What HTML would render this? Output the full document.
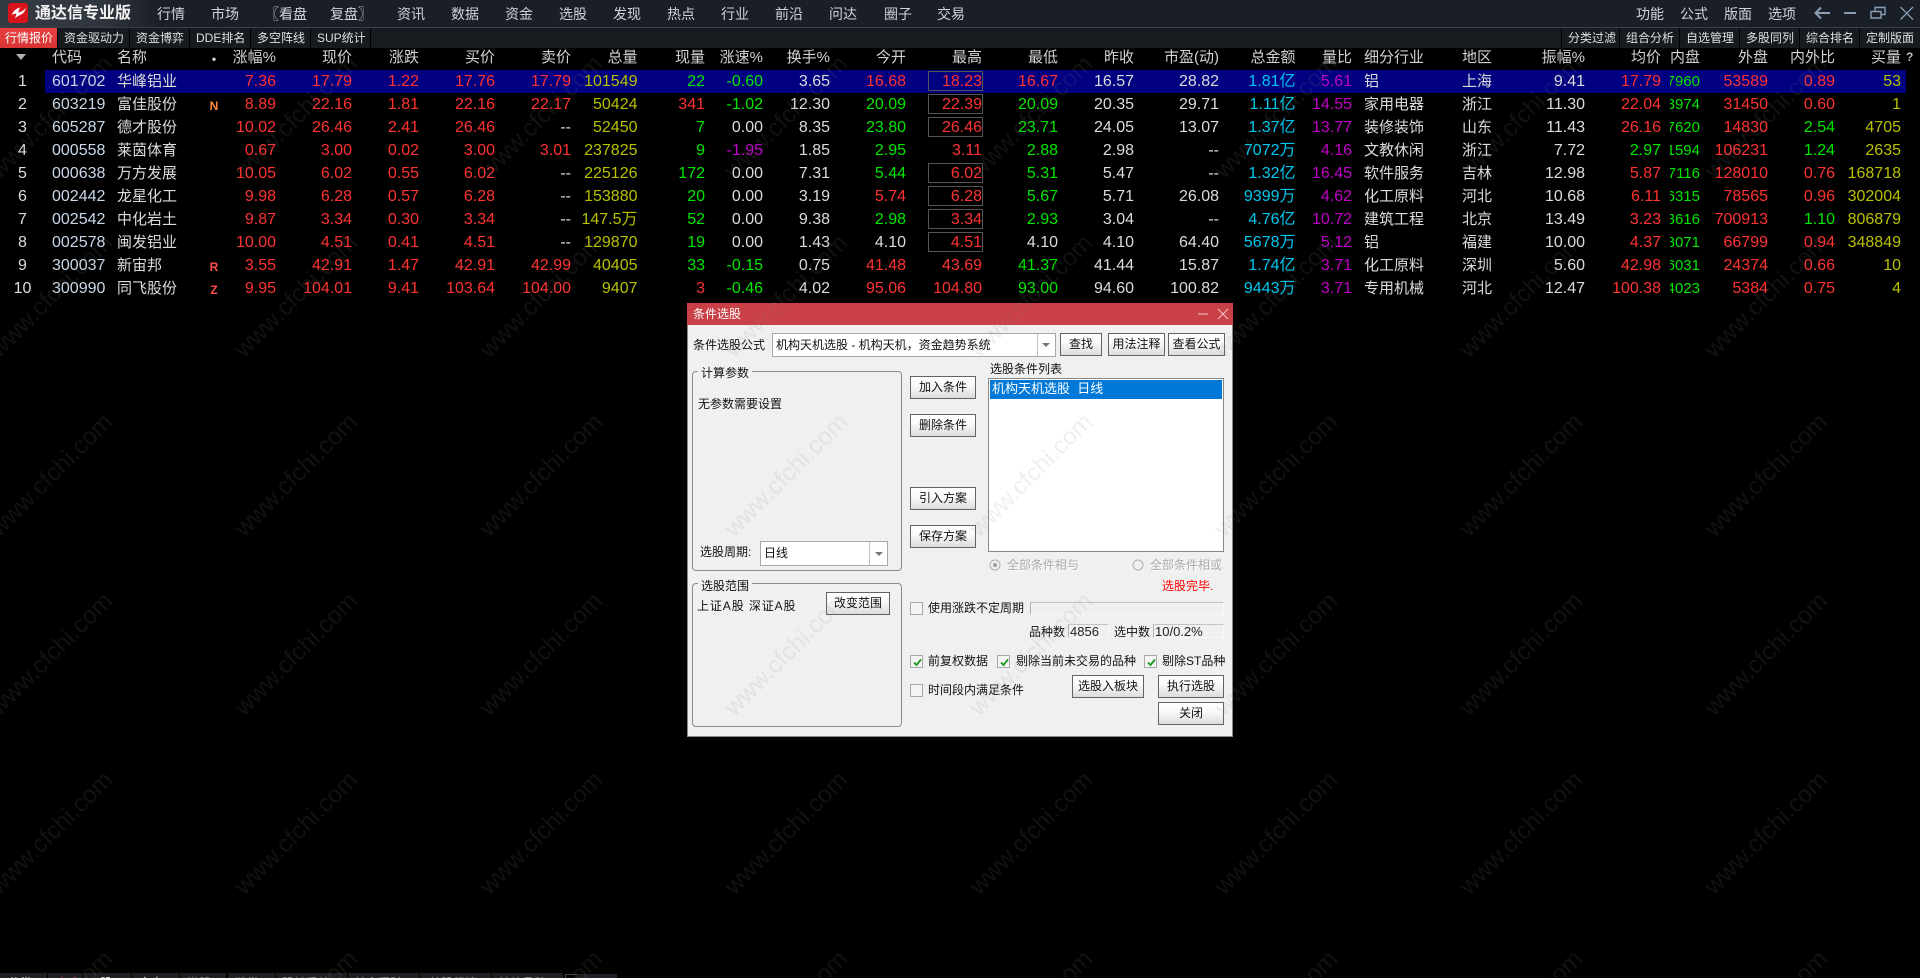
<!DOCTYPE html>
<html lang="zh-CN"><head><meta charset="utf-8"><title>通达信专业版</title>
<style>
*{box-sizing:border-box}
html,body{margin:0;padding:0;width:1920px;height:978px;overflow:hidden;background:#000}
body{position:relative;font-family:"Liberation Sans","Noto Sans CJK SC",sans-serif;color:#e0e0e0}
.a{position:absolute;white-space:nowrap}
#top{position:absolute;left:0;top:0;width:1920px;height:28px;background:linear-gradient(90deg,#343a42 0,#30363e 100px,#1a1f27 160px);border-bottom:1px solid #3a3f46}
.m{position:absolute;top:4px;line-height:20px;font-size:14px;color:#cfd3d8;white-space:nowrap}
#bar{position:absolute;left:0;top:28px;width:1920px;height:20px;background:#171b20}
.tb{position:absolute;top:0;height:20px;line-height:20px;font-size:12px;color:#dfdfdf;border-right:1px solid #000;padding-left:6px;white-space:nowrap;overflow:hidden}
.r{position:absolute;left:0;width:1920px;height:23px;line-height:23px;font-size:16px}
.r span{position:absolute;white-space:nowrap;top:0}
.r span:nth-child(1){left:0;width:45px;text-align:center;color:#dcdcdc}
.r span:nth-child(2){left:52px;color:#c8d8e8}
.r span:nth-child(3){left:117px;font-size:15px;color:#dcdcdc}
.r span:nth-child(4){left:204px;width:20px;text-align:center;font-size:12px;font-weight:bold;top:2px}
.r span:nth-child(5){right:1644px}
.r span:nth-child(6){right:1568px}
.r span:nth-child(7){right:1501px}
.r span:nth-child(8){right:1425px}
.r span:nth-child(9){right:1349px}
.r span:nth-child(10){right:1282.5px}
.r span:nth-child(11){right:1215px}
.r span:nth-child(12){right:1157px}
.r span:nth-child(13){right:1090px}
.r span:nth-child(14){right:1014px}
.r span:nth-child(15){right:938px}
.r span:nth-child(16){right:862px}
.r span:nth-child(17){right:786px}
.r span:nth-child(18){right:701px}
.r span:nth-child(19){right:624.5px}
.r span:nth-child(20){right:568px}
.r span:nth-child(21){left:1364px;font-size:15px;color:#dcdcdc}
.r span:nth-child(22){left:1462px;font-size:15px;color:#dcdcdc}
.r span:nth-child(23){right:335px}
.r span:nth-child(24){right:259px}
.r span:nth-child(25){left:1670px;width:30px;display:flex;justify-content:flex-end;overflow:hidden;font-size:15px}
.r span:nth-child(26){right:152px}
.r span:nth-child(27){right:85px}
.r span:nth-child(28){right:19px}
.h{font-size:15px}
.h span{color:#d2d2d2!important;font-size:15px!important}
.R{color:#ff3232}.G{color:#00e600}.W{color:#dcdcdc}.Y{color:#b8c000}.C{color:#00c8f0}.M{color:#c000c8}
.bx{position:absolute;left:928px;width:55px;height:20px;border:1px solid #555}
#dlg{position:absolute;left:687px;top:303px;width:546px;height:434px;background:#f0f0f0;border:1px solid #8a8a8a;border-top:none;color:#111;font-size:12px}
.d{position:absolute;white-space:nowrap;font-size:12px;line-height:18px;color:#111}
.btn{position:absolute;border:1px solid #636363;background:linear-gradient(#fff,#fafafa 40%,#dcdcdc);font-size:12px;text-align:center;color:#111;white-space:nowrap}
.grp{position:absolute;border:1px solid #8c8c8c;border-radius:4px}
.lg{position:absolute;background:#f0f0f0;padding:0 3px;font-size:12px;line-height:14px;color:#111;white-space:nowrap}
.cb{position:absolute;width:13px;height:13px;border:1px solid #a8a8a8;background:#f4f4f4}
.cb svg{position:absolute;left:1px;top:1px}
.sk{position:absolute;border:1px solid #f8f8f8;border-top-color:#c4c4c4;border-left-color:#b0b0b0;background:#f0f0f0;font-size:13px;line-height:13px;white-space:nowrap;color:#222}
.bt{position:absolute;top:973px;height:6px;background:#1c1f24;overflow:hidden;font-size:12px;line-height:14px;color:#8a8a8a}
.bt i{position:absolute;top:3px;font-style:normal;white-space:nowrap}
#wm{position:absolute;left:0;top:0;width:1920px;height:978px;pointer-events:none}
</style></head><body>

<div id="top">
<svg class="a" style="left:8px;top:3px" width="20" height="20" viewBox="0 0 20 20"><rect width="20" height="20" rx="3" fill="#d8141c"/><path d="M18 5C15 8 13 9 10 9.500L12 4.500C8 5.500 4.500 8.500 4 12C5.500 11 7 10.500 8.500 10.500L7 15.500C9 13.500 11 12.500 13 11.500C15.500 10.500 17 8 18 5Z" fill="#fff"/></svg>
<div class="a" style="left:35px;top:3px;line-height:22px;font-size:16px;font-weight:bold;color:#f2f2f2">通达信专业版</div>
<div class="m" style="left:157px">行情</div><div class="m" style="left:211px">市场</div>
<div class="m" style="left:265px">〖看盘</div><div class="m" style="left:330px">复盘〗</div>
<div class="m" style="left:397px">资讯</div><div class="m" style="left:451px">数据</div>
<div class="m" style="left:505px">资金</div><div class="m" style="left:559px">选股</div>
<div class="m" style="left:613px">发现</div><div class="m" style="left:667px">热点</div>
<div class="m" style="left:721px">行业</div><div class="m" style="left:775px">前沿</div>
<div class="m" style="left:829px">问达</div><div class="m" style="left:884px">圈子</div>
<div class="m" style="left:937px">交易</div>
<div class="m" style="left:1636px">功能</div><div class="m" style="left:1680px">公式</div>
<div class="m" style="left:1724px">版面</div><div class="m" style="left:1768px">选项</div>
<svg class="a" style="left:1812px;top:4px" width="104" height="18" viewBox="0 0 104 18" fill="none" stroke="#8a9fb5" stroke-width="1.6"><path d="M3 9H18M9 3.5L3.5 9L9 14.5" stroke-width="2"/><path d="M32 9H44" stroke-width="2"/><path d="M59 7.5H69V14H59ZM63 7.5V3.5H73V10.5H69" stroke-width="1.4"/><path d="M88.500 3L101 15.500M101 3L88.500 15.500" stroke-width="1.3"/></svg>
</div>

<div id="bar">
<div class="tb" style="left:0;width:58px;background:linear-gradient(#e84040,#d83434);padding-left:5px;color:#fff">行情报价</div>
<div class="tb" style="left:58px;width:72px">资金驱动力</div>
<div class="tb" style="left:130px;width:60px">资金博弈</div>
<div class="tb" style="left:190px;width:61px">DDE排名</div>
<div class="tb" style="left:251px;width:60px">多空阵线</div>
<div class="tb" style="left:311px;width:60px">SUP统计</div>
<div class="tb" style="left:1561px;width:59px;border-left:1px solid #000">分类过滤</div>
<div class="tb" style="left:1620px;width:60px">组合分析</div>
<div class="tb" style="left:1680px;width:60px">自选管理</div>
<div class="tb" style="left:1740px;width:60px">多股同列</div>
<div class="tb" style="left:1800px;width:60px">综合排名</div>
<div class="tb" style="left:1860px;width:60px;border-right:none">定制版面</div>
</div>

<div class="a" style="left:16px;top:54px;width:0;height:0;border-left:5px solid transparent;border-right:5px solid transparent;border-top:6px solid #b0b0b0"></div>
<div class="a" style="left:1906px;top:48px;font-size:12px;line-height:18px;font-weight:bold;color:#bbb">?</div>

<div class="r h" style="top:46px"><span></span><span>代码</span><span>名称</span><span style="font-size:12px!important">•</span><span>涨幅%</span><span>现价</span><span>涨跌</span><span>买价</span><span>卖价</span><span>总量</span><span>现量</span><span>涨速%</span><span>换手%</span><span>今开</span><span>最高</span><span>最低</span><span>昨收</span><span>市盈(动)</span><span>总金额</span><span>量比</span><span>细分行业</span><span>地区</span><span>振幅%</span><span>均价</span><span>内盘</span><span>外盘</span><span>内外比</span><span>买量</span></div>

<div class="a" style="left:45px;top:70px;width:1861px;height:22.500px;background:#000080"></div>
<div class="bx" style="top:71px"></div><div class="bx" style="top:94px"></div><div class="bx" style="top:117px"></div>
<div class="bx" style="top:163px"></div><div class="bx" style="top:186px"></div><div class="bx" style="top:209px"></div><div class="bx" style="top:232px"></div>

<div class="r" style="top:70px"><span>1</span><span>601702</span><span>华峰铝业</span><span></span><span class="R">7.36</span><span class="R">17.79</span><span class="R">1.22</span><span class="R">17.76</span><span class="R">17.79</span><span class="Y">101549</span><span class="G">22</span><span class="G">-0.60</span><span class="W">3.65</span><span class="R">16.68</span><span class="R">18.23</span><span class="R">16.67</span><span class="W">16.57</span><span class="W">28.82</span><span class="C">1.81亿</span><span class="M">5.61</span><span>铝</span><span>上海</span><span class="W">9.41</span><span class="R">17.79</span><span class="G">7960</span><span class="R">53589</span><span class="R">0.89</span><span class="Y">53</span></div>
<div class="r" style="top:93px"><span>2</span><span>603219</span><span>富佳股份</span><span style="color:#ff8c40">N</span><span class="R">8.89</span><span class="R">22.16</span><span class="R">1.81</span><span class="R">22.16</span><span class="R">22.17</span><span class="Y">50424</span><span class="R">341</span><span class="G">-1.02</span><span class="W">12.30</span><span class="G">20.09</span><span class="R">22.39</span><span class="G">20.09</span><span class="W">20.35</span><span class="W">29.71</span><span class="C">1.11亿</span><span class="M">14.55</span><span>家用电器</span><span>浙江</span><span class="W">11.30</span><span class="R">22.04</span><span class="G">3974</span><span class="R">31450</span><span class="R">0.60</span><span class="Y">1</span></div>
<div class="r" style="top:116px"><span>3</span><span>605287</span><span>德才股份</span><span></span><span class="R">10.02</span><span class="R">26.46</span><span class="R">2.41</span><span class="R">26.46</span><span class="W">--</span><span class="Y">52450</span><span class="G">7</span><span class="W">0.00</span><span class="W">8.35</span><span class="G">23.80</span><span class="R">26.46</span><span class="G">23.71</span><span class="W">24.05</span><span class="W">13.07</span><span class="C">1.37亿</span><span class="M">13.77</span><span>装修装饰</span><span>山东</span><span class="W">11.43</span><span class="R">26.16</span><span class="G">7620</span><span class="R">14830</span><span class="G">2.54</span><span class="Y">4705</span></div>
<div class="r" style="top:139px"><span>4</span><span>000558</span><span>莱茵体育</span><span></span><span class="R">0.67</span><span class="R">3.00</span><span class="R">0.02</span><span class="R">3.00</span><span class="R">3.01</span><span class="Y">237825</span><span class="G">9</span><span class="M">-1.95</span><span class="W">1.85</span><span class="G">2.95</span><span class="R">3.11</span><span class="G">2.88</span><span class="W">2.98</span><span class="W">--</span><span class="C">7072万</span><span class="M">4.16</span><span>文教休闲</span><span>浙江</span><span class="W">7.72</span><span class="G">2.97</span><span class="G">1594</span><span class="R">106231</span><span class="G">1.24</span><span class="Y">2635</span></div>
<div class="r" style="top:162px"><span>5</span><span>000638</span><span>万方发展</span><span></span><span class="R">10.05</span><span class="R">6.02</span><span class="R">0.55</span><span class="R">6.02</span><span class="W">--</span><span class="Y">225126</span><span class="G">172</span><span class="W">0.00</span><span class="W">7.31</span><span class="G">5.44</span><span class="R">6.02</span><span class="G">5.31</span><span class="W">5.47</span><span class="W">--</span><span class="C">1.32亿</span><span class="M">16.45</span><span>软件服务</span><span>吉林</span><span class="W">12.98</span><span class="R">5.87</span><span class="G">7116</span><span class="R">128010</span><span class="R">0.76</span><span class="Y">168718</span></div>
<div class="r" style="top:185px"><span>6</span><span>002442</span><span>龙星化工</span><span></span><span class="R">9.98</span><span class="R">6.28</span><span class="R">0.57</span><span class="R">6.28</span><span class="W">--</span><span class="Y">153880</span><span class="G">20</span><span class="W">0.00</span><span class="W">3.19</span><span class="R">5.74</span><span class="R">6.28</span><span class="G">5.67</span><span class="W">5.71</span><span class="W">26.08</span><span class="C">9399万</span><span class="M">4.62</span><span>化工原料</span><span>河北</span><span class="W">10.68</span><span class="R">6.11</span><span class="G">6315</span><span class="R">78565</span><span class="R">0.96</span><span class="Y">302004</span></div>
<div class="r" style="top:208px"><span>7</span><span>002542</span><span>中化岩土</span><span></span><span class="R">9.87</span><span class="R">3.34</span><span class="R">0.30</span><span class="R">3.34</span><span class="W">--</span><span class="Y">147.5万</span><span class="G">52</span><span class="W">0.00</span><span class="W">9.38</span><span class="G">2.98</span><span class="R">3.34</span><span class="G">2.93</span><span class="W">3.04</span><span class="W">--</span><span class="C">4.76亿</span><span class="M">10.72</span><span>建筑工程</span><span>北京</span><span class="W">13.49</span><span class="R">3.23</span><span class="G">8616</span><span class="R">700913</span><span class="G">1.10</span><span class="Y">806879</span></div>
<div class="r" style="top:231px"><span>8</span><span>002578</span><span>闽发铝业</span><span></span><span class="R">10.00</span><span class="R">4.51</span><span class="R">0.41</span><span class="R">4.51</span><span class="W">--</span><span class="Y">129870</span><span class="G">19</span><span class="W">0.00</span><span class="W">1.43</span><span class="W">4.10</span><span class="R">4.51</span><span class="W">4.10</span><span class="W">4.10</span><span class="W">64.40</span><span class="C">5678万</span><span class="M">5.12</span><span>铝</span><span>福建</span><span class="W">10.00</span><span class="R">4.37</span><span class="G">8071</span><span class="R">66799</span><span class="R">0.94</span><span class="Y">348849</span></div>
<div class="r" style="top:254px"><span>9</span><span>300037</span><span>新宙邦</span><span style="color:#ff5050">R</span><span class="R">3.55</span><span class="R">42.91</span><span class="R">1.47</span><span class="R">42.91</span><span class="R">42.99</span><span class="Y">40405</span><span class="G">33</span><span class="G">-0.15</span><span class="W">0.75</span><span class="R">41.48</span><span class="R">43.69</span><span class="G">41.37</span><span class="W">41.44</span><span class="W">15.87</span><span class="C">1.74亿</span><span class="M">3.71</span><span>化工原料</span><span>深圳</span><span class="W">5.60</span><span class="R">42.98</span><span class="G">6031</span><span class="R">24374</span><span class="R">0.66</span><span class="Y">10</span></div>
<div class="r" style="top:277px"><span>10</span><span>300990</span><span>同飞股份</span><span style="color:#ff5050">Z</span><span class="R">9.95</span><span class="R">104.01</span><span class="R">9.41</span><span class="R">103.64</span><span class="R">104.00</span><span class="Y">9407</span><span class="R">3</span><span class="G">-0.46</span><span class="W">4.02</span><span class="R">95.06</span><span class="R">104.80</span><span class="G">93.00</span><span class="W">94.60</span><span class="W">100.82</span><span class="C">9443万</span><span class="M">3.71</span><span>专用机械</span><span>河北</span><span class="W">12.47</span><span class="R">100.38</span><span class="G">4023</span><span class="R">5384</span><span class="R">0.75</span><span class="Y">4</span></div>

<div id="dlg">
<div style="position:absolute;left:-1px;top:0;width:546px;height:22px;background:#c94046"></div>
<div class="d" style="left:5px;top:2px;color:#fff">条件选股</div>
<svg class="a" style="left:510px;top:5px" width="36" height="12" fill="none" stroke="#f4c8c8" stroke-width="1"><path d="M0 6H10M20 1L30 11M30 1L20 11"/></svg>

<div class="d" style="left:5px;top:33px">条件选股公式</div>
<div class="a" style="left:84px;top:30px;width:284px;height:24px;background:#fff;border:1px solid #a8a8a8"></div>
<div class="a" style="left:349px;top:31px;width:1px;height:22px;background:#c0c0c0"></div>
<div class="a" style="left:354px;top:40px;width:0;height:0;border-left:4px solid transparent;border-right:4px solid transparent;border-top:4px solid #777"></div>
<div class="d" style="left:88px;top:33px">机构天机选股 - 机构天机，资金趋势系统</div>
<div class="btn" style="left:372px;top:30px;width:42px;height:23px;line-height:20px">查找</div>
<div class="btn" style="left:420px;top:30px;width:57px;height:23px;line-height:20px">用法注释</div>
<div class="btn" style="left:480px;top:30px;width:57px;height:23px;line-height:20px">查看公式</div>

<div class="grp" style="left:4px;top:68px;width:210px;height:200px"></div>
<div class="lg" style="left:10px;top:63px">计算参数</div>
<div class="d" style="left:10px;top:92px">无参数需要设置</div>
<div class="d" style="left:12px;top:240px">选股周期:</div>
<div class="a" style="left:72px;top:238px;width:128px;height:25px;background:#fff;border:1px solid #a8a8a8"></div>
<div class="a" style="left:181px;top:239px;width:1px;height:23px;background:#c0c0c0"></div>
<div class="a" style="left:187px;top:249px;width:0;height:0;border-left:4px solid transparent;border-right:4px solid transparent;border-top:4px solid #777"></div>
<div class="d" style="left:76px;top:241px">日线</div>

<div class="grp" style="left:4px;top:280px;width:210px;height:144px"></div>
<div class="lg" style="left:10px;top:276px">选股范围</div>
<div class="d" style="left:9px;top:294px;letter-spacing:.9px">上证A股 深证A股</div>
<div class="btn" style="left:138px;top:289px;width:64px;height:23px;line-height:20px">改变范围</div>

<div class="btn" style="left:222px;top:73px;width:66px;height:23px;line-height:20px">加入条件</div>
<div class="btn" style="left:222px;top:111px;width:66px;height:23px;line-height:20px">删除条件</div>
<div class="btn" style="left:222px;top:184px;width:66px;height:23px;line-height:20px">引入方案</div>
<div class="btn" style="left:222px;top:222px;width:66px;height:23px;line-height:20px">保存方案</div>

<div class="d" style="left:302px;top:57px">选股条件列表</div>
<div class="a" style="left:300px;top:75px;width:236px;height:174px;background:#fff;border:1px solid #888"></div>
<div class="a" style="left:302px;top:77px;width:232px;height:19px;background:#0078d7"></div>
<div class="d" style="left:304px;top:77px;color:#fff;font-size:13px;white-space:pre">机构天机选股  日线</div>

<svg class="a" style="left:301px;top:256px" width="12" height="12"><circle cx="6" cy="6" r="5" fill="#f0f0f0" stroke="#b0b0b0"/><circle cx="6" cy="6" r="2" fill="#a0a0a0"/></svg>
<div class="d" style="left:319px;top:253px;color:#a8a8a8;text-shadow:1px 1px 0 #fff">全部条件相与</div>
<svg class="a" style="left:444px;top:256px" width="12" height="12"><circle cx="6" cy="6" r="5" fill="#f0f0f0" stroke="#b0b0b0"/></svg>
<div class="d" style="left:462px;top:253px;color:#a8a8a8;text-shadow:1px 1px 0 #fff">全部条件相或</div>
<div class="d" style="left:474px;top:274px;color:#f00">选股完毕.</div>

<div class="cb" style="left:222px;top:299px"></div>
<div class="d" style="left:240px;top:296px">使用涨跌不定周期</div>
<div class="sk" style="left:342px;top:299px;width:194px;height:13px"></div>
<div class="d" style="left:341px;top:320px">品种数</div>
<div class="sk" style="left:380px;top:321px;width:41px;height:14px;padding-left:1px">4856</div>
<div class="d" style="left:426px;top:320px">选中数</div>
<div class="sk" style="left:465px;top:321px;width:71px;height:14px;padding-left:1px">10/0.2%</div>

<div class="cb" style="left:222px;top:352px"><svg width="11" height="11" fill="none" stroke="#1a9a1a" stroke-width="1.800"><path d="M2 5.500L4.500 8L9 2.500"/></svg></div>
<div class="d" style="left:240px;top:349px">前复权数据</div>
<div class="cb" style="left:309px;top:352px"><svg width="11" height="11" fill="none" stroke="#1a9a1a" stroke-width="1.800"><path d="M2 5.500L4.500 8L9 2.500"/></svg></div>
<div class="d" style="left:328px;top:349px">剔除当前未交易的品种</div>
<div class="cb" style="left:456px;top:352px"><svg width="11" height="11" fill="none" stroke="#1a9a1a" stroke-width="1.800"><path d="M2 5.500L4.500 8L9 2.500"/></svg></div>
<div class="d" style="left:474px;top:349px">剔除ST品种</div>

<div class="cb" style="left:222px;top:381px"></div>
<div class="d" style="left:240px;top:378px">时间段内满足条件</div>
<div class="btn" style="left:384px;top:372px;width:72px;height:23px;line-height:20px">选股入板块</div>
<div class="btn" style="left:470px;top:372px;width:66px;height:23px;line-height:20px">执行选股</div>
<div class="btn" style="left:470px;top:399px;width:66px;height:23px;line-height:20px">关闭</div>
</div>

<div class="bt" style="left:0;width:47px;color:#eee"><i style="left:8px">分类</i></div>
<div class="bt" style="left:48px;width:35px;color:#e84040"><i style="left:8px">自选</i></div>
<div class="bt" style="left:84px;width:47px;color:#eee"><i style="left:8px">A股</i></div>
<div class="bt" style="left:132px;width:47px;color:#eee"><i style="left:7px">自定</i></div>
<div class="bt" style="left:180px;width:46px"><i style="left:7px">港股</i></div>
<div class="bt" style="left:228px;width:47px"><i style="left:6px">期货</i></div>
<div class="bt" style="left:276px;width:71px"><i style="left:6px">股转系统</i></div>
<div class="bt" style="left:348px;width:71px"><i style="left:6px">基金理财</i></div>
<div class="bt" style="left:420px;width:71px"><i style="left:9px">美股行情</i></div>
<div class="bt" style="left:492px;width:71px"><i style="left:6px">其他品种</i></div>
<div class="a" style="left:565px;top:974px;width:13px;height:5px;border:1px solid #444"></div>
<div class="a" style="left:579px;top:974px;width:38px;height:4px;background:#1c2128"></div>

<svg id="wm" width="1920" height="978" xmlns="http://www.w3.org/2000/svg">
<defs><pattern id="p" width="245" height="179" patternUnits="userSpaceOnUse" patternTransform="translate(-70.500 28.500)">
<text x="122.500" y="89.500" text-anchor="middle" dominant-baseline="middle" transform="rotate(-45 122.500 89.500)" font-family="Liberation Sans, sans-serif" font-size="24.500" fill="#808080" fill-opacity=".13">www.cfchi.com</text>
</pattern></defs>
<rect width="1920" height="978" fill="url(#p)"/>
</svg>
</body></html>
